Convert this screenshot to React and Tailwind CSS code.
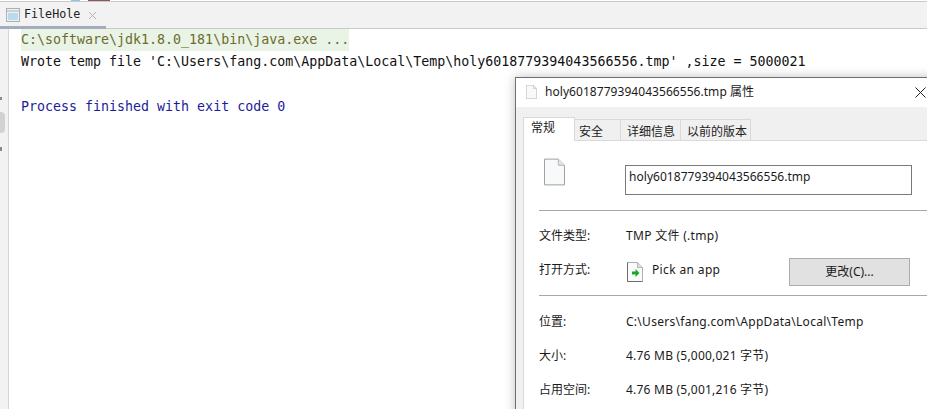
const mono = { fontFamily: '"DejaVu Sans Mono", monospace' };

function FileIcon({ className }) {
  return (
    <svg className={className} viewBox="0 0 22 28" fill="none">
      <path d="M0.5 0.5H15L21.5 7V27.5H0.5Z" fill="#f8f9fb" stroke="#9a9a9a" />
      <path d="M15 0.5V7H21.5" fill="#e4e4e4" stroke="#b5b5b5" />
    </svg>
  );
}

function OpenWithIcon() {
  return (
    <svg className="w-4 h-5 shrink-0 ml-px" viewBox="0 0 16 20" fill="none">
      <path d="M0.5 0.5H10.5L15.5 5.5V19.5H0.5Z" fill="#fbfbfb" stroke="#b0b0b0" />
      <path d="M10.5 0.5V5.5H15.5" fill="#e0e0e0" stroke="#b5b5b5" />
      <path d="M0.5 0.5V19.5H15.5" stroke="#6b6b6b" />
      <path d="M5 9.5H8.5V7L12.5 11L8.5 15V12.5H5Z" fill="#16a92b" />
    </svg>
  );
}

function Row({ label, children, className = '', labelClass = '' }) {
  return (
    <div className={`flex items-center ${className}`}>
      <div className={`w-[87px] shrink-0 ${labelClass}`}>{label}</div>
      {children}
    </div>
  );
}

function PropertiesDialog() {
  return (
    <div
      className="absolute left-[515px] top-[77px] w-[440px] h-[360px] bg-[#f0f0f0] border border-[#6f6f6f] shadow-[0_0_10px_rgba(0,0,0,0.25)] text-[12px] text-[#1a1a1a]"
      style={{ fontFamily: '"Noto Sans", "Noto Sans CJK SC", sans-serif' }}
    >
      <div className="h-[29px] bg-white flex items-center pl-[10px] pb-[2px]">
        <FileIcon className="w-[11px] h-[14px] mr-[8px]" />
        <span className="tracking-[0.05px]">holy6018779394043566556.tmp 属性</span>
        <svg className="absolute left-[399px] top-[9px] w-[11px] h-[11px]" viewBox="0 0 11 11" stroke="#222" strokeWidth="1">
          <path d="M0.5 0.5L10.5 10.5M10.5 0.5L0.5 10.5" />
        </svg>
      </div>

      <div className="pl-[7px] pt-[10px]">
        <div className="flex items-end h-[24px] relative z-10 text-[#222]">
          <div className="h-[24px] w-[52px] bg-white border border-b-0 border-[#d9d9d9] pl-[7px] leading-[20px]">常规</div>
          <div className="h-[22px] w-[46px] border border-l-0 border-b-0 border-[#d9d9d9] pl-[4px] leading-[24px]">安全</div>
          <div className="h-[22px] w-[60px] border border-l-0 border-b-0 border-[#d9d9d9] pl-[6px] leading-[24px]">详细信息</div>
          <div className="h-[22px] w-[70px] border border-l-0 border-b-0 border-[#d9d9d9] pl-[6px] leading-[24px]">以前的版本</div>
        </div>
        <div className="-mt-px bg-white border border-[#d9d9d9] h-[300px] pl-[15px] pr-[16px] pt-[17px]">
          <div className="flex items-start h-[52px]">
            <div className="w-[86px]">
              <FileIcon className="w-[21px] h-[28px] ml-[5px]" />
            </div>
            <div className="mt-[7px] w-[287px] h-[30px] border border-[#7a7a7a] pl-[3px] leading-[21px] tracking-[0.04px]">
              holy6018779394043566556.tmp
            </div>
          </div>
          <div className="h-px bg-[#a8a8a8]" />
          <Row label="文件类型:" className="mt-[16px] h-[18px]">
            <span className="tracking-[0.3px]">TMP 文件 (.tmp)</span>
          </Row>
          <Row label="打开方式:" labelClass="pb-[4px]" className="mt-[13px] h-[28px]">
            <OpenWithIcon />
            <span className="ml-[9px] w-[137px] pb-[4px] tracking-[0.36px]">Pick an app</span>
            <button className="w-[121px] h-[28px] bg-[#e1e1e1] border border-[#adadad] text-center">更改(C)...</button>
          </Row>
          <div className="h-px bg-[#a8a8a8] mt-[9px]" />
          <Row label="位置:" className="mt-[17px] h-[18px]">
            <span className="tracking-[0.28px]">C:\Users\fang.com\AppData\Local\Temp</span>
          </Row>
          <Row label="大小:" className="mt-[16px] h-[18px]">
            <span className="tracking-[0.22px]">4.76 MB (5,000,021 字节)</span>
          </Row>
          <Row label="占用空间:" className="mt-[16px] h-[18px]">
            <span className="tracking-[0.22px]">4.76 MB (5,001,216 字节)</span>
          </Row>
        </div>
      </div>
    </div>
  );
}

export default function App() {
  return (
    <div className="relative w-[927px] h-[409px] overflow-hidden bg-white flex flex-col">
      {/* sliver of the row above the tool window, cut by the crop */}
      <div className="h-[1px] bg-white shrink-0 flex pl-[71px]">
        <div className="w-[9px] bg-[#8fc6e3]" />
        <div className="ml-[8px] w-[22px] bg-[#8a5a5a]" />
      </div>
      <div className="h-[28px] shrink-0 bg-[#f2f2f2] border-t border-b border-[#c9c9c9] relative flex items-center pl-[6px]">
        <svg className="w-[14px] h-[14px]" viewBox="0 0 14 14" fill="none">
          <rect x="0.5" y="0.5" width="13" height="13" fill="#eef0f1" stroke="#a9b2b8" />
          <path d="M0.5 3H13.5" stroke="#a9b2b8" />
          <rect x="2" y="5" width="10" height="7" fill="#b9dbea" />
        </svg>
        <span className="ml-[4px] text-[11.7px] text-[#222] font-medium" style={mono}>FileHole</span>
        <svg className="ml-[8px] w-[9px] h-[9px]" viewBox="0 0 9 9" stroke="#b4b4b4">
          <path d="M1 1L8 8M8 1L1 8" />
        </svg>
        <div className="absolute left-0 bottom-[-1px] w-[106px] h-[3px] bg-[#a4adbb]" />
      </div>
      <div className="flex-1 flex min-h-0">
        <div className="w-[9px] shrink-0 bg-[#f2f2f2] border-r border-[#d5d5d5] flex flex-col">
          <div className="mt-[68px] h-[3px] w-[2px] bg-[#8a8a8a]" />
          <div className="mt-[12px] h-[21px] w-[5px] bg-[#d2d2d2] rounded-r-sm" />
          <div className="mt-[14px] h-[4px] w-[2px] bg-[#8a8a8a]" />
        </div>
        <div className="pl-[12px] text-[13.3px] leading-[22.33px] whitespace-pre" style={mono}>
          <div className="w-fit bg-[#e9f3e6] text-[#6d6b2f]">C:\software\jdk1.8.0_181\bin\java.exe ...</div>
          <div className="text-[#111]">Wrote temp file 'C:\Users\fang.com\AppData\Local\Temp\holy6018779394043566556.tmp' ,size = 5000021</div>
          <div className="h-[22.33px]" />
          <div className="text-[#1c1c9c]">Process finished with exit code 0</div>
        </div>
      </div>
      <PropertiesDialog />
    </div>
  );
}
